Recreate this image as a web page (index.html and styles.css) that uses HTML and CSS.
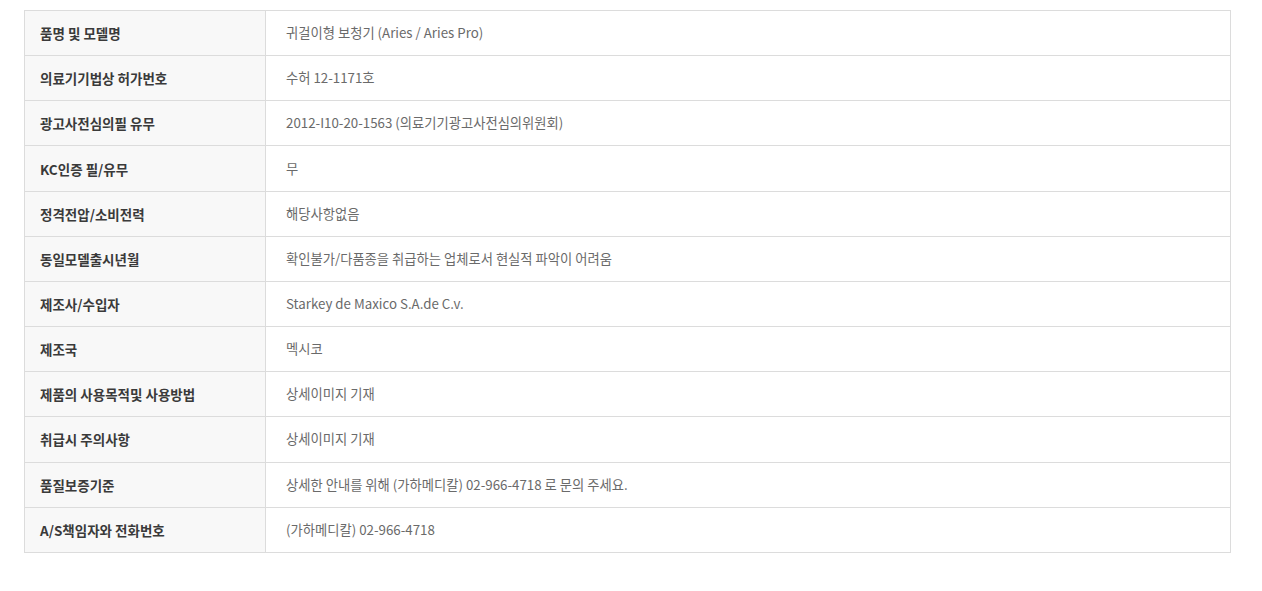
FILE: index.html
```
<!DOCTYPE html>
<html>
<head>
	<meta charset="utf-8">
	<title>상품정보</title>
	<link rel="stylesheet" href="styles.css">
</head>
<body>

<table class="info-table">
	<tr><th>품명 및 모델명</th><td>귀걸이형 보청기 (Aries / Aries Pro)</td></tr>
	<tr><th>의료기기법상 허가번호</th><td>수허 12-1171호</td></tr>
	<tr><th>광고사전심의필 유무</th><td>2012-I10-20-1563 (의료기기광고사전심의위원회)</td></tr>
	<tr><th>KC인증 필/유무</th><td>무</td></tr>
	<tr><th>정격전압/소비전력</th><td>해당사항없음</td></tr>
	<tr><th>동일모델출시년월</th><td>확인불가/다품종을 취급하는 업체로서 현실적 파악이 어려움</td></tr>
	<tr><th>제조사/수입자</th><td>Starkey de Maxico S.A.de C.v.</td></tr>
	<tr><th>제조국</th><td>멕시코</td></tr>
	<tr><th>제품의 사용목적및 사용방법</th><td>상세이미지 기재</td></tr>
	<tr><th>취급시 주의사항</th><td>상세이미지 기재</td></tr>
	<tr><th>품질보증기준</th><td>상세한 안내를 위해 (가하메디칼) 02-966-4718 로 문의 주세요.</td></tr>
	<tr><th>A/S책임자와 전화번호</th><td>(가하메디칼) 02-966-4718</td></tr>
</table>

</body>
</html>
```
FILE: styles.css
```
* {
	box-sizing: border-box;
}

body {
	margin: 0;
	padding: 10px 31px 0 24px;
	background: #fff;
	font-family: "Noto Sans CJK KR", "Noto Sans", sans-serif;
	font-size: 13px;
}

/* Product info table */
.info-table {
	width: 100%;
	border-collapse: collapse;
	border: 1px solid #dcdcdc;
}

.info-table th,
.info-table td {
	height: 45.17px;
	padding: 0 20px;
	border-top: 1px solid #dcdcdc;
	text-align: left;
	vertical-align: middle;
	line-height: 18px;
}

.info-table th {
	width: 241px;
	padding-left: 15px;
	background: #f8f8f8;
	border-right: 1px solid #dcdcdc;
	color: #3a3a3a;
	font-size: 13.5px;
	font-weight: bold;
}

.info-table td {
	color: #6a6a6a;
	font-size: 13.3px;
}
```
